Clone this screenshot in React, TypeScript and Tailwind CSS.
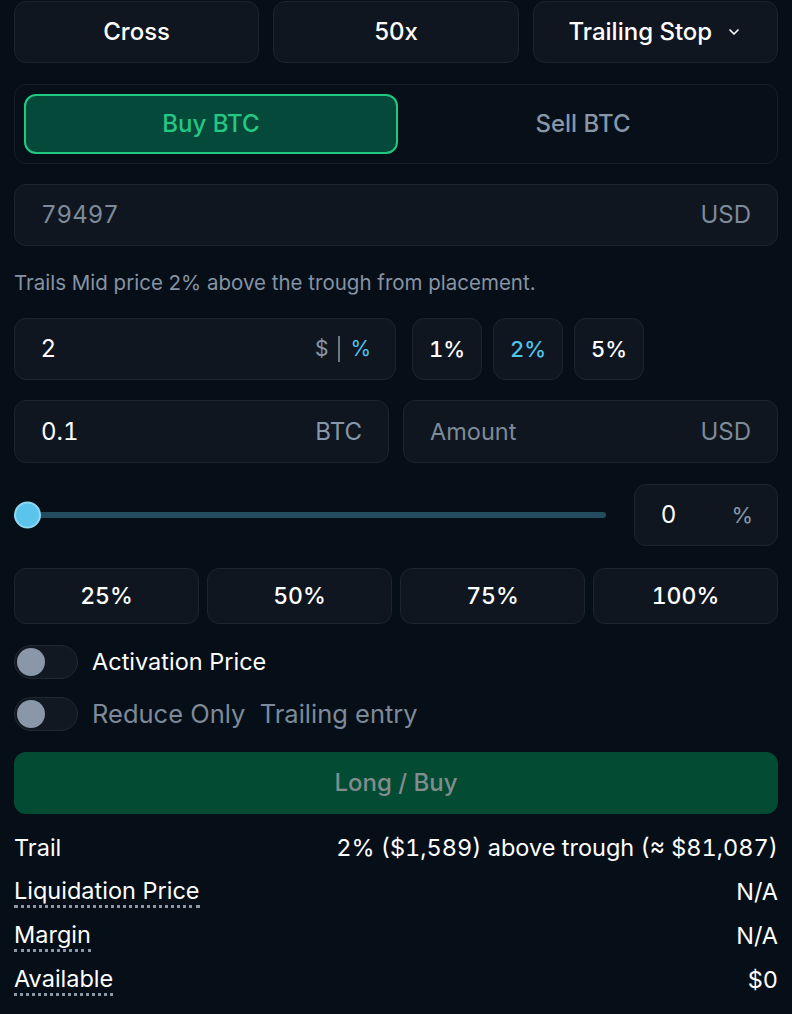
import React from 'react';
import { ChevronDown } from 'lucide-react';

const font = { fontFamily: 'Inter, "Noto Sans", sans-serif' };

// Plain dark box used by buttons and inputs
const box = 'rounded-[12px] border border-[#1c242e] bg-[#0f1620]';

function Toggle() {
  return (
    <div className="flex h-[34px] w-[64px] shrink-0 items-center rounded-full border border-[#1f2833] bg-[#111821] px-[2px]">
      <div className="h-[28px] w-[28px] rounded-full bg-[#8a97a8]" />
    </div>
  );
}

function InfoRow({ label, value, dotted }: { label: string; value: string; dotted?: boolean }) {
  return (
    <div className="flex h-[44px] items-center justify-between text-[23.5px] text-white">
      <span className={dotted ? 'border-b-[3px] border-dotted border-[#8a97a8] leading-[28px]' : ''}>{label}</span>
      <span className="tabular-nums">{value}</span>
    </div>
  );
}

export default function App() {
  return (
    <div className="min-h-[1014px] w-[792px] bg-[#060e17] px-[14px] pt-[1px]" style={font}>
      {/* margin mode, leverage, order type */}
      <div className="grid grid-cols-3 gap-[14px]">
        <button className={`${box} h-[62px] text-[24px] font-medium text-white`}>Cross</button>
        <button className={`${box} h-[62px] text-[24px] font-medium text-white`}>50x</button>
        <button className={`${box} flex h-[62px] items-center justify-center gap-[14px] text-[24px] font-medium text-white`}>
          Trailing Stop
          <ChevronDown className="h-[16px] w-[16px]" strokeWidth={2.5} />
        </button>
      </div>

      {/* side */}
      <div className="mt-[21px] flex h-[80px] items-center rounded-[12px] border border-[#161e28] bg-[#070f18] p-[9px]">
        <button className="h-[60px] flex-1 rounded-[12px] border-2 border-[#1fca80] bg-[#05493a] text-[24px] font-medium text-[#24c784]">
          Buy BTC
        </button>
        <button className="h-[60px] flex-1 text-[24px] font-medium text-[#8796a8]">Sell BTC</button>
      </div>

      {/* trigger price */}
      <div className={`${box} mt-[20px] flex h-[62px] items-center justify-between px-[26px]`}>
        <span className="text-[24px] tabular-nums text-[#7d8a99]">79497</span>
        <span className="text-[24px] text-[#7d8a99]">USD</span>
      </div>

      <p className="mt-[23px] text-[20.5px] leading-[28px] text-[#8593a4]">
        Trails Mid price 2% above the trough from placement.
      </p>

      {/* trail amount */}
      <div className="mt-[21px] flex items-center">
        <div className={`${box} flex h-[62px] w-[382px] items-center justify-between pl-[26px] pr-[24px]`}>
          <span className="text-[24px] text-white">2</span>
          <div className="flex items-center gap-[10px] text-[21px]">
            <span className="text-[#8796a8]">$</span>
            <span className="h-[26px] w-[2px] bg-[#6b7887]" />
            <span className="text-[#4fc3ea]">%</span>
          </div>
        </div>
        <div className="ml-[16px] flex gap-[11px]">
          <button className={`${box} h-[62px] w-[70px] text-[22px] font-medium tabular-nums text-white`}>1%</button>
          <button className={`${box} h-[62px] w-[70px] text-[22px] font-medium tabular-nums text-[#4fc3ea]`}>2%</button>
          <button className={`${box} h-[62px] w-[70px] text-[22px] font-medium tabular-nums text-white`}>5%</button>
        </div>
      </div>

      {/* size */}
      <div className="mt-[20px] grid grid-cols-2 gap-[14px]">
        <div className={`${box} flex h-[63px] items-center justify-between px-[26px]`}>
          <span className="text-[24px] tabular-nums text-white">0.1</span>
          <span className="text-[24px] text-[#8796a8]">BTC</span>
        </div>
        <div className={`${box} flex h-[63px] items-center justify-between px-[26px]`}>
          <span className="text-[23.5px] text-[#7d8a99]">Amount</span>
          <span className="text-[24px] text-[#7d8a99]">USD</span>
        </div>
      </div>

      {/* slider */}
      <div className="mt-[21px] flex items-center gap-[28px]">
        <div className="relative flex h-[62px] flex-1 items-center">
          <div className="h-[6px] w-full rounded-full bg-[#234c5f]" />
          <div className="absolute left-0 top-1/2 h-[27px] w-[27px] -translate-y-1/2 rounded-full border-2 border-[#8fd8f4] bg-[#5bc4ec]" />
        </div>
        <div className={`${box} flex h-[62px] w-[144px] items-center justify-between pl-[26px] pr-[24px]`}>
          <span className="text-[24px] text-white">0</span>
          <span className="text-[22px] text-[#8796a8]">%</span>
        </div>
      </div>

      {/* quick size */}
      <div className="mt-[22px] grid grid-cols-4 gap-[8px]">
        {['25%', '50%', '75%', '100%'].map((p) => (
          <button key={p} className={`${box} h-[56px] text-[23px] font-medium tabular-nums text-white`}>
            {p}
          </button>
        ))}
      </div>

      {/* toggles */}
      <div className="mt-[21px] flex h-[34px] items-center gap-[14px]">
        <Toggle />
        <span className="text-[23.5px] leading-[34px] text-white">Activation Price</span>
      </div>
      <div className="mt-[18px] flex h-[34px] items-center gap-[14px]">
        <Toggle />
        <span className="whitespace-pre text-[25.5px] leading-[34px] text-[#7d8a99]">Reduce Only  Trailing entry</span>
      </div>

      <button className="mt-[21px] h-[62px] w-full rounded-[12px] bg-[#034b33] text-[24px] font-medium text-[#7f8d8c]">
        Long / Buy
      </button>

      {/* summary */}
      <div className="mt-[12px]">
        <InfoRow label="Trail" value="2% ($1,589) above trough (≈ $81,087)" />
        <InfoRow label="Liquidation Price" value="N/A" dotted />
        <InfoRow label="Margin" value="N/A" dotted />
        <InfoRow label="Available" value="$0" dotted />
      </div>
    </div>
  );
}
